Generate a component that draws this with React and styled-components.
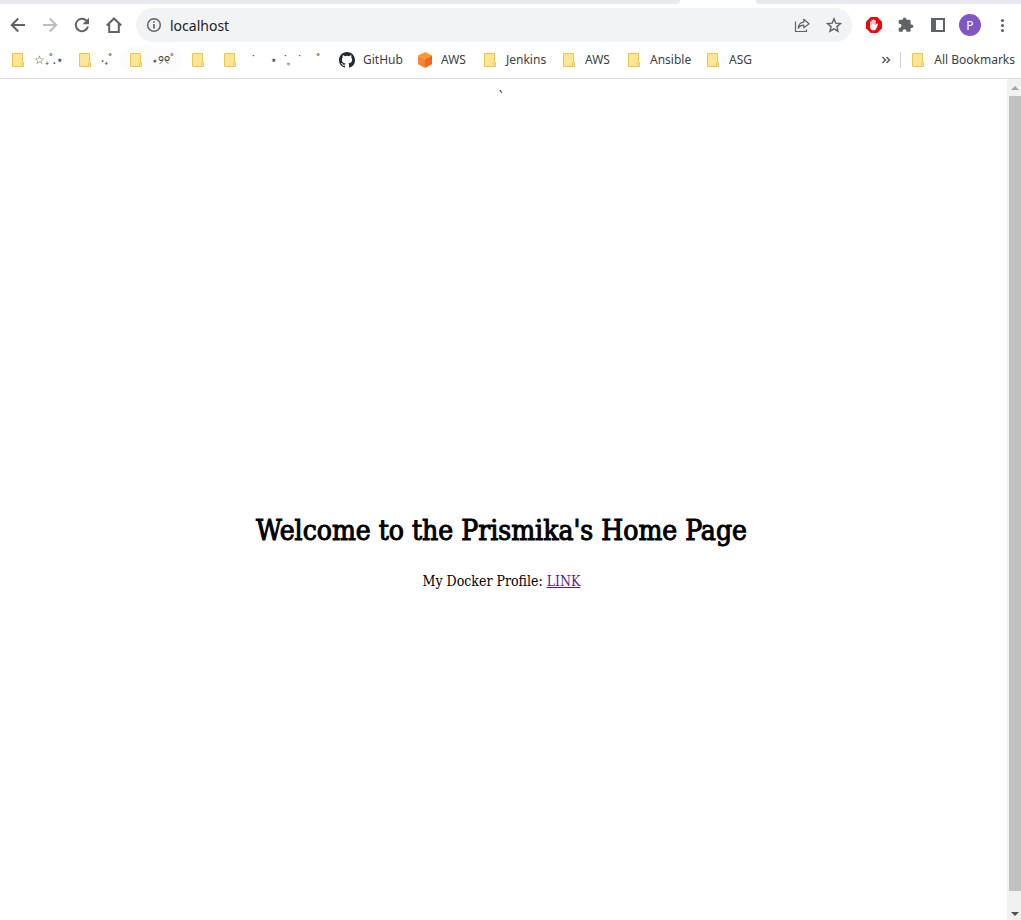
import React from 'react';
import styled, { createGlobalStyle } from 'styled-components';

const GlobalStyle = createGlobalStyle`
  * { box-sizing: border-box; }
  body { margin: 0; background: #fff; }
  button, input { font: inherit; }
`;

const Window = styled.div`
  display: flex;
  flex-direction: column;
  min-height: 100vh;
  font-family: "Noto Sans", "Open Sans", sans-serif;
  color: #3c4043;
`;

const TabStrip = styled.div`
  display: flex;
  height: 4px;
  background: #fff;
`;

const TabEdge = styled.div`
  flex: ${(p) => p.$grow};
  background: #e8eaed;
  border-radius: ${(p) => (p.$left ? '0 0 4px 0' : '0 0 0 4px')};
`;

const ActiveTab = styled.div`
  width: 76px;
`;

const Toolbar = styled.div`
  display: flex;
  align-items: center;
  gap: 8px;
  height: 42px;
  padding: 0 5px 0 4px;
`;

const ButtonGroup = styled.div`
  display: flex;
  gap: 4px;
`;

const IconButton = styled.button`
  display: flex;
  align-items: center;
  justify-content: center;
  width: 28px;
  height: 28px;
  padding: 0;
  border: 0;
  border-radius: 50%;
  background: none;
  color: ${(p) => p.$color || '#5f6368'};
`;

const AddressBar = styled.div`
  flex: 1;
  display: flex;
  align-items: center;
  gap: 4px;
  height: 34px;
  padding: 0 4px;
  border-radius: 17px;
  background: #f1f3f4;
`;

const AddressInput = styled.input`
  flex: 1;
  min-width: 0;
  height: 28px;
  padding: 0 2px;
  margin-left: -4px;
  border: 0;
  outline: 0;
  background: none;
  font-size: 14px;
  color: #202124;
`;

const Avatar = styled.span`
  display: flex;
  align-items: center;
  justify-content: center;
  width: 22px;
  height: 22px;
  border-radius: 50%;
  background: #7e57c2;
  color: #fff;
  font-size: 12px;
`;

const BookmarkBar = styled.nav`
  display: flex;
  align-items: center;
  height: 33px;
  padding: 0 6px 5px 2px;
  border-bottom: 1px solid #dadce0;
  font-size: 12px;
  line-height: 16px;
`;

const Bookmark = styled.a`
  display: flex;
  align-items: center;
  gap: 8px;
  height: 28px;
  padding: 0 8px;
  border-radius: 14px;
  background: ${(p) => (p.$hovered ? '#fcfcfc' : 'none')};
  color: inherit;
  text-decoration: none;
  white-space: pre;
`;

const Label = styled.span`
  width: ${(p) => p.$width}px;
`;

const Overflow = styled.button`
  display: flex;
  margin-left: auto;
  padding: 0 4px;
  border: 0;
  background: none;
  color: #5f6368;
`;

const Divider = styled.span`
  width: 1px;
  height: 16px;
  margin: 0 1px 0 2px;
  background: #cfd1d4;
`;

const AllBookmarks = styled(Bookmark)`
  padding-right: 0;
`;

const Viewport = styled.div`
  flex: 1;
  display: flex;
`;

const Page = styled.main`
  flex: 1;
  display: flex;
  flex-direction: column;
  align-items: center;
  padding: 8px 4px 0 0;
  color: #000;
  font-family: "DejaVu Serif Condensed", "DejaVu Serif", serif;
  font-size: 14px;
  line-height: 20px;
`;

const Tick = styled.div`
  height: 20px;
`;

const Title = styled.h1`
  margin: 404px 0 0;
  font-size: 28px;
  line-height: 40px;
  font-weight: 400;
  -webkit-text-stroke: 1px #000;
  white-space: nowrap;
`;

const Profile = styled.p`
  margin: 20px 0 0;
`;

const ProfileLink = styled.a`
  color: #551a8b;
`;

const Scrollbar = styled.div`
  display: flex;
  flex-direction: column;
  align-items: flex-end;
  width: 14px;
  background: #f1f1f1;
`;

const Arrow = styled.button`
  display: flex;
  align-items: center;
  justify-content: center;
  width: 12px;
  height: 17px;
  padding: 0;
  border: 0;
  background: none;
  color: ${(p) => p.$color};
`;

const Thumb = styled.div`
  flex: 1;
  width: 12px;
  margin-bottom: 12px;
  background: #c1c1c1;
`;

const Svg = ({ size = 16, children, ...rest }) => (
  <svg width={size} height={size} viewBox={`0 0 ${size} ${size}`} fill="none" aria-hidden="true" {...rest}>
    {children}
  </svg>
);

const ArrowLeft = () => (
  <Svg><path d="M15 8H2M8.2 1.5 1.8 8l6.4 6.5" stroke="currentColor" strokeWidth="2" /></Svg>
);
const ArrowRight = () => (
  <Svg><path d="M1 8h13M7.8 1.5 14.2 8l-6.4 6.5" stroke="currentColor" strokeWidth="2" /></Svg>
);
const Reload = () => (
  <Svg>
    <path d="M14 9.6A6.2 6.2 0 1 1 12.6 3.8L14 5.2" stroke="currentColor" strokeWidth="2" />
    <path d="M15 .8v6.4H8.6z" fill="currentColor" />
  </Svg>
);
const Home = () => (
  <Svg><path d="M.8 8.5 8 1.5l7.2 7M3.2 7v8h9.6V7" stroke="currentColor" strokeWidth="2" /></Svg>
);
const Info = () => (
  <Svg>
    <circle cx="8" cy="8" r="6.3" stroke="currentColor" strokeWidth="1.5" />
    <path d="M8 7v4.6M8 4.2v1.6" stroke="currentColor" strokeWidth="1.7" />
  </Svg>
);
const Share = () => (
  <Svg>
    <path d="M1.5 4.5v10h11v-2" stroke="currentColor" strokeWidth="1.2" />
    <path d="M4.2 11.2C4.5 7.5 6.6 5.5 9.8 5.2V2.3L15 6.7l-5.2 4.2V8.2c-2.5 0-4.2.8-5.6 3z" stroke="currentColor" strokeWidth="1.2" strokeLinejoin="round" />
  </Svg>
);
const Star = () => (
  <Svg><path d="m8 1.8 1.8 4.3 4.7.4-3.6 3.1 1.1 4.6L8 11.8l-4 2.4 1.1-4.6-3.6-3.1 4.7-.4z" stroke="currentColor" strokeWidth="1.4" /></Svg>
);
const Blocker = () => (
  <Svg>
    <path d="M4.7 0h6.6L16 4.7v6.6L11.3 16H4.7L0 11.3V4.7z" fill="#e8090c" />
    <path d="M4.2 8.3V5c0-1 1.3-1 1.3 0V3.8c0-1 1.3-1 1.3 0v-.7c0-1 1.4-1 1.4 0v.6c0-1 1.4-1 1.4 0v4.5l.9-1.3c.6-.8 1.9-.4 1.5.5l-1.7 4.1c-.6 1.3-1.3 1.8-2.8 1.8-2.2 0-3.3-1.2-3.3-3.4z" fill="#fff" />
    <path d="M5.6 4.3v3.2M7 3.7v3.6M8.4 3.7v3.6" stroke="#e8090c" strokeWidth=".35" />
  </Svg>
);
const Puzzle = () => (
  <Svg>
    <path d="M13.6 7.4h-1V4.2c0-.8-.6-1.4-1.4-1.4H8.4V2.2a1.8 1.8 0 0 0-3.6 0v.6H2c-.7 0-1.3.6-1.3 1.4v2.5h.8a2 2 0 0 1 0 4H.7v2.7c0 .8.6 1.4 1.3 1.4h2.6v-.9a2 2 0 0 1 3.9 0v.9h2.7c.8 0 1.4-.6 1.4-1.4V11h1a1.8 1.8 0 0 0 0-3.6z" fill="currentColor" />
  </Svg>
);
const SidePanel = () => (
  <Svg>
    <rect x="2" y="2" width="12" height="12" stroke="currentColor" strokeWidth="2" />
    <path d="M1 1h5v14H1z" fill="currentColor" />
  </Svg>
);
const Dots = () => (
  <Svg>
    <circle cx="8.5" cy="3.5" r="1.6" fill="currentColor" />
    <circle cx="8.5" cy="8.5" r="1.6" fill="currentColor" />
    <circle cx="8.5" cy="13.5" r="1.6" fill="currentColor" />
  </Svg>
);
const Folder = () => (
  <Svg>
    <path d="M2.5 1.5h10v9.2h1v3.8h-11z" fill="#ffe694" stroke="#e8c64d" />
    <rect x="11.5" y="10.5" width="2" height="4" rx="1" fill="#ffe694" stroke="#e8c64d" />
  </Svg>
);
const GitHubMark = () => (
  <Svg>
    <path fillRule="evenodd" fill="#24292f" d="M8 0C3.58 0 0 3.58 0 8c0 3.54 2.29 6.53 5.47 7.59.4.07.55-.17.55-.38 0-.19-.01-.82-.01-1.49-2.01.37-2.53-.49-2.69-.94-.09-.23-.48-.94-.82-1.13-.28-.15-.68-.52-.01-.53.63-.01 1.08.58 1.23.82.72 1.21 1.87.87 2.33.66.07-.52.28-.87.51-1.07-1.78-.2-3.64-.89-3.64-3.95 0-.87.31-1.59.82-2.15-.08-.2-.36-1.02.08-2.12 0 0 .67-.21 2.2.82a7.6 7.6 0 0 1 4 0c1.53-1.04 2.2-.82 2.2-.82.44 1.1.16 1.92.08 2.12.51.56.82 1.27.82 2.15 0 3.07-1.87 3.75-3.65 3.95.29.25.54.73.54 1.48 0 1.07-.01 1.93-.01 2.2 0 .21.15.46.55.38A8.01 8.01 0 0 0 16 8c0-4.42-3.58-8-8-8z" />
  </Svg>
);
const Cube = () => (
  <Svg>
    <path d="M8 0 15 3.5 8 7 1 3.5z" fill="#fd9827" />
    <path d="M1 3.5 8 7v9l-7-3.7z" fill="#f58536" />
    <path d="M15 3.5 8 7v9l7-3.7z" fill="#ee6723" />
  </Svg>
);
const Chevrons = () => (
  <Svg><path d="m4.5 5 3 3-3 3M8.5 5l3 3-3 3" stroke="currentColor" strokeWidth="1.6" /></Svg>
);

const bookmarks = [
  { text: '☆₊˚.⋆', width: 27, icon: Folder },
  { text: '‧₊˚', width: 11, icon: Folder },
  { text: '⋆୨୧˚', width: 22, icon: Folder, hovered: true },
  { icon: Folder },
  { text: '  ˙     ⋆  ˙。˙     ˚', width: 77, icon: Folder },
  { text: 'GitHub', width: 38, icon: GitHubMark },
  { text: 'AWS', width: 25, icon: Cube },
  { text: 'Jenkins', width: 39, icon: Folder },
  { text: 'AWS', width: 25, icon: Folder },
  { text: 'Ansible', width: 39, icon: Folder },
  { text: 'ASG', width: 23, icon: Folder },
];

export default function App() {
  return (
    <>
      <GlobalStyle />
      <Window>
        <TabStrip>
          <TabEdge $grow={680} $left />
          <ActiveTab />
          <TabEdge $grow={265} />
        </TabStrip>
        <Toolbar>
          <ButtonGroup>
            <IconButton aria-label="Back"><ArrowLeft /></IconButton>
            <IconButton aria-label="Forward" $color="#babcbe"><ArrowRight /></IconButton>
            <IconButton aria-label="Reload"><Reload /></IconButton>
            <IconButton aria-label="Home"><Home /></IconButton>
          </ButtonGroup>
          <AddressBar>
            <IconButton aria-label="Site information"><Info /></IconButton>
            <AddressInput aria-label="Address" defaultValue="localhost" />
            <IconButton aria-label="Share"><Share /></IconButton>
            <IconButton aria-label="Bookmark this page"><Star /></IconButton>
          </AddressBar>
          <ButtonGroup>
            <IconButton aria-label="Ad blocker"><Blocker /></IconButton>
            <IconButton aria-label="Extensions"><Puzzle /></IconButton>
            <IconButton aria-label="Side panel"><SidePanel /></IconButton>
            <IconButton aria-label="Profile"><Avatar>P</Avatar></IconButton>
            <IconButton aria-label="Menu"><Dots /></IconButton>
          </ButtonGroup>
        </Toolbar>
        <BookmarkBar aria-label="Bookmarks">
          {bookmarks.map(({ text, width, icon: Icon, hovered }, i) => (
            <Bookmark key={i} href="#" $hovered={hovered} aria-label={text ? undefined : 'Folder'}>
              <Icon />
              {text && <Label $width={width}>{text}</Label>}
            </Bookmark>
          ))}
          <Overflow aria-label="More bookmarks"><Chevrons /></Overflow>
          <Divider />
          <AllBookmarks href="#"><Folder />All Bookmarks</AllBookmarks>
        </BookmarkBar>
        <Viewport>
          <Page>
            <Tick>`</Tick>
            <Title>Welcome to the Prismika's Home Page</Title>
            <Profile>My Docker Profile: <ProfileLink href="#">LINK</ProfileLink></Profile>
          </Page>
          <Scrollbar>
            <Arrow aria-label="Scroll up" $color="#a3a3a3">
              <Svg size={8}><path d="M0 6h8L4 2z" fill="currentColor" /></Svg>
            </Arrow>
            <Thumb />
            <Arrow aria-label="Scroll down" $color="#505050">
              <Svg size={8}><path d="M0 4h8L4 8z" fill="currentColor" /></Svg>
            </Arrow>
          </Scrollbar>
        </Viewport>
      </Window>
    </>
  );
}
